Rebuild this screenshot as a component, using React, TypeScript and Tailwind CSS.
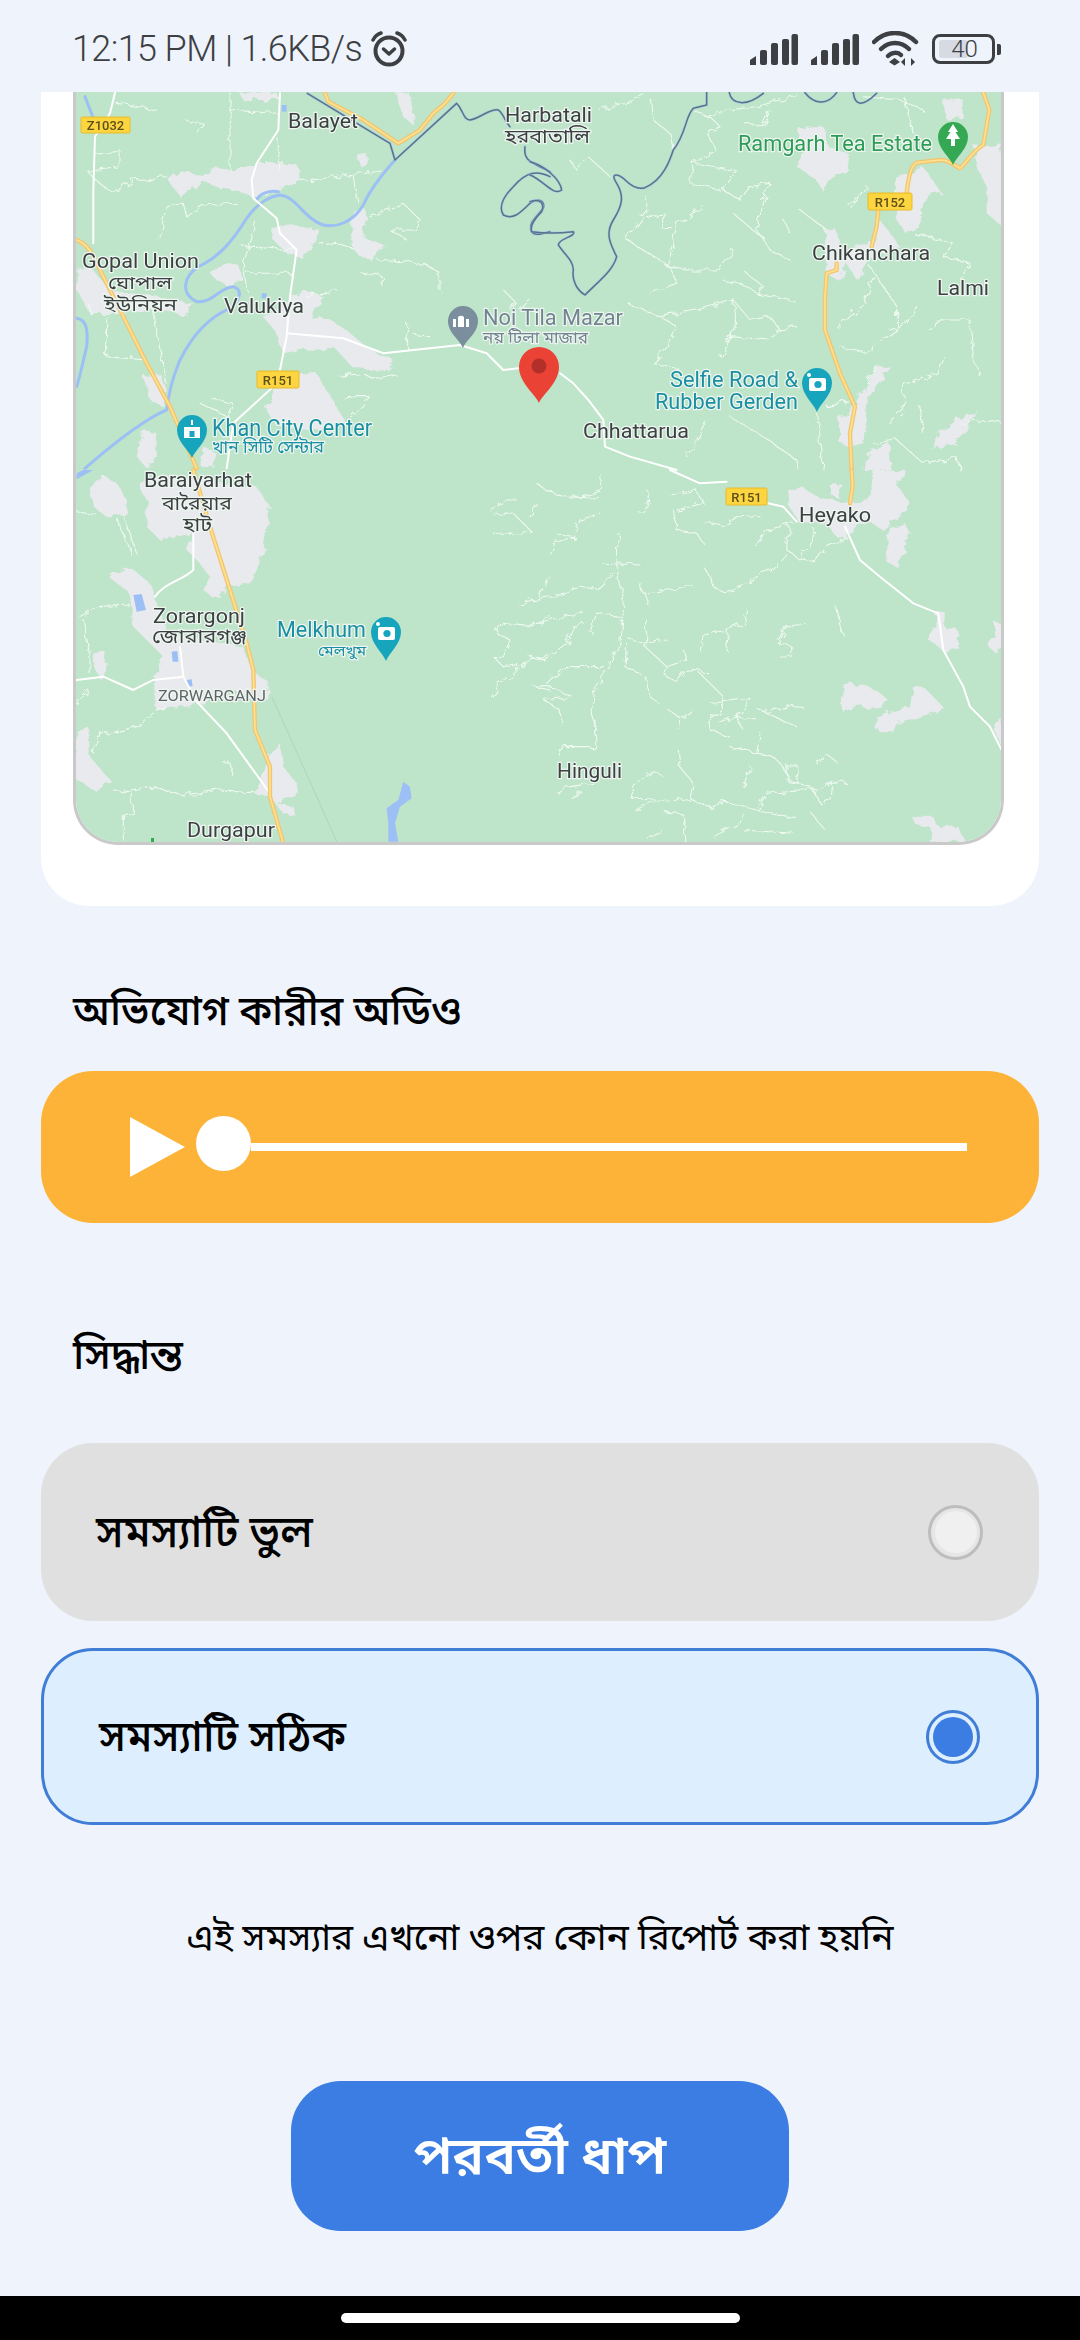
import React from 'react';

// thin village roads, in zoom-crop coordinates for each map quadrant
const thinTopLeft = [
  'M140 40 L260 60', 'M480 10 L480 240', 'M480 60 L620 70', 'M345 90 L400 100 L380 135',
  'M75 190 L150 180 L150 230 L50 240 L75 270 L130 310 L190 270 L290 260',
  'M265 445 L290 350 L340 340 L350 380 L400 345 L500 340', 'M620 140 L630 240',
  'M695 275 L930 240 M850 255 L860 330', 'M560 400 L520 520 L530 600', 'M520 470 L680 480',
  'M530 550 L670 550', 'M750 465 L800 460 L850 475',
  'M900 380 L1000 340 L1050 390 L1040 420 L960 420 L1010 450',
  'M920 510 L1060 520 L1110 550 L1110 600', 'M870 545 L940 560 L940 590', 'M705 620 L800 600',
  'M1300 600 L1340 640 L1320 660', 'M1010 700 L1010 780', 'M1030 730 L1080 740',
  'M800 860 L880 850 L910 870 L980 855', 'M820 920 L900 920 L840 990',
  'M420 920 L490 940 L470 980 L390 940', 'M110 680 L110 800 L230 810', 'M250 660 L270 780 L290 880',
  'M60 640 L60 670 L170 670', 'M1350 660 L1380 630',
];

const thinTopRight = [
  'M210 60 C 240 50 290 40 340 10', 'M365 30 L370 90 L420 130 L430 180',
  'M120 210 L140 240 L180 205 L240 260', 'M500 70 L540 80 L570 110 L530 130 L560 180 L490 220 L480 280 L570 300',
  'M530 80 L590 60 L680 50 L800 15', 'M640 100 L700 110 L720 60',
  'M490 220 L620 240 L580 300 L630 330 L660 290 L720 280 L700 340 L680 420 L720 480 L780 510',
  'M610 370 L680 430 L700 440', 'M520 350 L440 400 L430 470 L410 530 L470 540 L560 540 L610 480',
  'M350 320 L350 360 L300 430 L290 450 L420 530 L440 580 L360 610', 'M350 380 L410 375 L390 410 L420 410',
  'M295 640 L390 680 L440 710 L410 780 L370 820 L450 840', 'M390 680 L500 660 L610 630 L620 700 L570 800',
  'M610 630 L660 690 L720 680 L750 720 L800 710', 'M600 740 L720 750 L750 720', 'M650 550 L700 590 L680 610 L790 630',
  'M580 570 L650 590 L700 620', 'M810 360 L890 420', 'M780 430 L760 390', 'M960 350 L1010 290',
  'M1020 530 L1100 650 L1100 720 L1000 790 L930 770', 'M1030 560 L1000 640 L920 710',
  'M1150 430 L1270 460 L1240 500 L1320 520 L1290 570', 'M1000 20 L1110 30 L1180 60', 'M1120 20 L1150 130',
  'M1200 720 L1240 690 L1320 690 L1330 800 L1350 860', 'M1240 800 L1220 850 L1120 880 L1120 960 L1080 1000',
  'M1160 650 L1130 700 L1080 720', 'M890 950 L960 935', 'M860 970 L880 1140', 'M530 1000 L470 1100',
  'M600 980 L700 1040 L800 1110 L810 1140', 'M1030 1060 L1100 1050 L1180 1120 L1280 1100 L1290 1140',
  'M1170 950 L1180 1030', 'M1290 1000 L1380 990 L1418 1000', 'M1010 880 L1040 830',
];

const thinBottomLeft = [
  'M20 125 L80 135', 'M140 145 L190 260', 'M160 140 L200 250', 'M30 440 L80 410 L180 405',
  'M40 450 L60 560 L60 610', 'M20 700 L55 660', 'M80 800 L200 770 L260 720 L290 710', 'M80 800 L70 850',
  'M130 960 L180 965 L250 950 L340 975 L450 960 L550 965', 'M190 970 L190 1030 L160 1040 L160 1110',
  'M460 875 L480 880 L490 920', 'M1260 120 L1300 90 L1340 90', 'M1270 130 L1330 130 L1390 190 L1270 190',
  'M1350 405 L1400 390 L1440 320',
  'M1440 440 L1380 470 L1300 460 L1280 490 L1320 510 L1300 560 L1270 560 L1300 590 L1340 580 L1330 620 L1290 640 L1265 680',
  'M1340 600 L1380 570 L1440 560', 'M1395 650 L1440 660',
];

const thinBottomRight = [
  'M20 40 L50 60 L100 80 L210 85', 'M160 80 L220 60 L210 15', 'M350 60 L355 110 L330 130',
  'M420 75 L500 60 L520 100 L440 120', 'M430 120 L440 180 L500 190 L520 220', 'M520 155 L580 165 L620 135 L690 140',
  'M0 140 L25 105', 'M210 130 L150 150 L130 200 L80 190', 'M130 200 L70 220 L60 250', 'M675 230 L710 180 L790 160',
  'M775 165 L770 240 L805 265 L855 275 L890 230 L950 205', 'M770 255 L730 300 L690 315 L640 345 L590 370 L550 350 L530 300',
  'M850 170 L850 220 L810 260', 'M265 190 L260 300 L280 380 L270 520 L240 580 L190 670 L180 720 L200 780 L200 830 L100 830 L90 860',
  'M0 390 L60 380 L100 370 L150 350 L190 360 L250 310', 'M220 280 L330 285', 'M330 340 L340 370 L490 350', 'M345 370 L360 410',
  'M0 465 L90 440 L160 430', 'M180 485 L200 430 L270 440', 'M0 560 L40 570 L110 520 L130 470 L160 460',
  'M300 510 L345 520 L410 510', 'M290 520 L285 590 L330 610', 'M345 530 L410 590 L410 620 L440 635 L470 600 L530 605',
  'M410 590 L470 570 L460 540', 'M350 450 L350 530', 'M345 620 L360 680 L385 700', 'M510 545 L520 495 L590 480 L640 460 L650 420',
  'M590 480 L595 545', 'M20 650 L60 650 L130 680 L40 690 L90 720 L95 765', 'M50 640 L100 590 L220 590',
  'M410 715 L450 745 L480 720 M450 745 L445 775', 'M510 610 L580 680 L580 720 L530 750 L540 780 L600 800',
  'M545 700 L660 685 L620 740 L640 780', 'M570 760 L620 740 L680 750', 'M680 715 L800 770 M700 725 L780 710 L820 712',
  'M600 830 L730 860 L760 890 L780 930 L860 960 L900 940 L950 940', 'M690 790 L680 850', 'M770 885 L800 885 L805 940 L775 935 L770 885',
  'M445 840 L450 890 L490 940 L480 985 L540 1015 L580 995 L680 1020 L800 1045', 'M305 945 L305 985 L480 990',
  'M310 945 L370 905 L400 920', 'M315 1020 L370 995', 'M680 1020 L710 970 L850 960 L870 1000 L900 990 L905 940',
  'M640 1030 L630 1060 L550 1100', 'M640 1080 L790 1090', 'M405 1025 L460 1035 L465 1115', 'M350 1105 L405 1075',
  'M660 890 L640 950', 'M845 1030 L880 1075', 'M770 470 L745 520 L785 530 L785 555 L745 555', 'M770 470 L825 460',
  'M915 405 L925 440 L940 495', 'M85 970 L120 950 L190 940', 'M130 990 L150 960', 'M865 885 L885 850 L925 880',
];

const quadrants = [
  {
    origin: 'translate(70 90) scale(0.3333)',
    thin: thinTopLeft,
    towns: [
      'M295 270 L325 242 L400 258 L415 232 L490 240 L560 222 L680 222 L695 270 L625 300 L560 325 L500 300 L440 290 L395 275 L330 320 Z',
      'M510 8 L620 8 L630 30 L520 30 Z', 'M975 10 L1020 10 L1035 110 L1000 80 Z', 'M860 190 L885 185 L892 225 L870 228 Z',
      'M680 405 L750 420 L720 480 L690 500 L650 490 L610 450 L605 410 Z', 'M845 370 L890 360 L880 440 L950 470 L905 510 L870 500 L845 470 Z',
      'M415 545 L500 520 L520 570 L480 590 L440 570 Z',
      'M580 680 L700 600 L760 620 L720 680 L780 690 L830 720 L900 780 L970 810 L960 840 L850 835 L800 780 L690 780 L640 790 L620 730 Z',
      'M640 850 L740 850 L800 950 L830 1000 L760 1020 L620 1010 L590 960 Z', 'M20 540 L60 530 L120 600 L370 640 L340 680 L280 660 L60 670 L20 600 Z',
      'M220 1020 L260 1030 L260 1100 L230 1135 L200 1100 Z', 'M220 860 L270 850 L290 900 L280 950 L240 930 Z', 'M400 1070 L440 1090 L430 1130 L390 1130 Z',
    ],
    water: ['M635 45 h15 v20 h-15z', 'M575 610 h15 v15 h-15z'],
    rivers: [
      'M975 210 C 930 260 900 300 880 345 C 850 395 800 415 760 405 C 700 385 680 320 630 315 C 590 320 555 350 530 385 C 490 450 450 500 385 530 C 340 560 330 610 380 635 C 430 640 450 590 490 590 C 520 600 510 630 480 655 C 420 680 370 730 330 810 C 310 860 300 890 290 960 C 220 990 120 1070 45 1135',
      'M560 330 C 570 310 600 300 625 305', 'M45 20 L70 85', 'M20 685 C 50 690 55 720 50 770 C 40 810 30 860 20 890',
    ],
    border: [
      'M712 10 L960 160 L975 210 L1160 40 C 1180 60 1180 90 1200 90 C 1230 85 1260 55 1285 60 C 1300 70 1305 95 1320 110',
      'M1365 170 C 1360 210 1380 215 1420 235 L1440 245',
      'M1440 260 C 1400 240 1370 245 1330 290 C 1300 320 1285 350 1300 375 C 1330 390 1350 370 1380 340 C 1410 320 1425 335 1420 355 C 1395 385 1375 400 1385 425 C 1395 440 1420 430 1440 425',
    ],
    highways: [
      'M765 10 L775 35 L880 90 L985 160 L1050 120 L1090 70 L1125 40 L1150 10',
      'M20 450 C 50 460 70 490 90 540 L160 680 L230 820 L300 950 L380 1135',
    ],
    roads: [
      'M630 10 L625 120 L560 220 L545 270 L550 325 L620 385 L630 430 L680 480 L660 620 L650 740 L630 840',
      'M650 730 L820 745 L940 790 L1170 765 L1250 790 L1300 840 L1345 835',
      'M610 890 L490 1000 L470 1135', 'M135 8 L120 70 L75 140 L70 300 L70 460',
    ],
  },
  {
    origin: 'translate(530 90) scale(0.3333)',
    thin: thinTopRight,
    towns: [
      'M805 115 L880 110 L900 175 L955 190 L950 240 L905 265 L880 305 L860 270 L800 230 L820 200 Z', 'M1240 30 L1295 25 L1295 80 L1250 90 Z',
      'M1335 170 L1415 160 L1418 410 L1370 370 L1370 290 L1340 230 Z', 'M1095 260 L1130 250 L1180 230 L1235 310 L1190 315 L1170 400 L1125 430 L1095 380 Z',
      'M885 420 L915 415 L940 490 L1030 450 L1050 390 L1110 470 L1020 510 L980 570 L950 520 L930 575 L890 550 L885 490 Z',
      'M1040 830 L1085 830 L1020 910 L1000 1060 L960 1070 L930 1060 L925 985 L950 980 L975 940 L1020 870 Z', 'M1010 1090 L1075 1055 L1085 1140 L1000 1140 Z',
      'M1230 1020 L1340 960 L1310 1020 L1270 1060 L1210 1080 Z',
    ],
    water: [],
    rivers: [],
    border: [
      'M0 215 C 40 225 90 265 95 300 C 70 320 40 270 0 255',
      'M0 335 C 30 325 45 340 35 365 C 10 390 0 410 5 425 C 40 430 90 430 130 425 C 140 440 85 445 85 465 C 100 490 130 510 130 540 C 125 570 140 600 165 615 C 210 570 250 540 260 500 C 240 460 225 430 250 390 C 275 350 285 320 260 280 C 240 250 260 250 280 265 C 300 285 320 300 345 293 C 400 270 420 210 430 180 C 470 130 465 80 490 55 L530 45 L530 8',
      'M598 8 C 605 45 650 50 700 10', 'M825 8 C 850 40 890 50 920 8', 'M970 8 C 975 50 1000 50 1040 10',
    ],
    highways: [
      'M1360 8 L1378 60 L1360 165 C 1320 190 1310 220 1290 235 C 1270 225 1260 210 1230 210 L1160 218 C 1140 230 1135 270 1130 310',
      'M1045 360 L1040 410 L1025 470', 'M920 520 L920 540 L890 550 L885 620 L885 720 L930 850 L975 950 L960 1030 L965 1140',
    ],
    roads: ['M90 850 L130 880 L175 930 L220 990 L225 1070 L300 1100 L440 1140'],
  },
  {
    origin: 'translate(70 470) scale(0.3333)',
    thin: thinBottomLeft,
    towns: [
      'M230 90 L210 50 L250 10 L560 50 L600 110 L580 240 L540 340 L480 350 L430 385 L400 360 L420 320 L380 270 L350 240 L370 190 L270 210 L230 170 Z',
      'M60 60 L100 15 L140 40 L170 90 L170 130 L110 140 L70 110 Z',
      'M115 320 L180 290 L240 340 L260 400 L290 480 L340 500 L520 530 L545 600 L600 640 L590 690 L480 660 L400 700 L260 720 L250 640 L280 560 L240 520 L190 470 L180 370 Z',
      'M70 545 L110 550 L100 640 L75 600 Z', 'M20 780 L55 770 L60 860 L120 930 L80 965 L20 930 Z',
      'M600 850 L630 820 L640 890 L680 940 L680 980 L620 1000 L670 1010 L680 1040 L640 1030 L600 980 L550 970 L570 940 Z',
    ],
    water: [
      'M190 375 L215 372 L228 420 L200 425 Z', 'M305 545 L322 543 L325 575 L308 575 Z', 'M350 630 L365 628 L368 648 L355 650 Z',
      'M1000 935 L1020 950 L1025 985 L990 1010 L975 1060 L985 1115 L955 1115 L955 1060 L950 1015 L985 990 Z', 'M20 28 L70 0 L40 0 L20 10 Z',
    ],
    rivers: [],
    border: [],
    highways: ['M370 0 L420 170 L480 360 L530 520 L550 600 L555 780 L600 890 L600 980 L640 1120'],
    roads: [
      'M370 190 V300 C 340 330 280 340 255 380', 'M20 630 L100 620 L190 660 L250 630 L340 620',
      'M330 530 L340 620 L380 695 L470 790 L600 970',
    ],
  },
  {
    origin: 'translate(530 470) scale(0.3333)',
    thin: thinBottomRight,
    towns: [
      'M775 65 L815 50 L860 80 L950 100 L1020 90 L1030 0 L1125 0 L1105 50 L1140 100 L1115 130 L1060 180 L1010 150 L950 190 L950 205 L920 200 L890 160 L810 160 L780 110 Z',
      'M1075 175 L1130 165 L1142 190 L1125 250 L1100 290 L1070 275 Z', 'M900 45 L935 40 L925 80 L900 75 Z',
      'M945 645 L1000 640 L1070 685 L1050 715 L990 710 L930 720 Z',
      'M1040 735 L1140 710 L1150 650 L1175 645 L1220 690 L1248 720 L1150 750 L1100 760 L1090 785 L1040 780 Z',
      'M1190 505 L1215 470 L1220 420 L1240 420 L1245 475 L1285 480 L1285 535 L1245 545 L1225 530 Z',
      'M1375 530 L1395 495 L1395 455 L1418 460 L1418 520 L1400 550 Z', 'M1385 770 L1418 750 L1418 830 Z',
      'M1145 1040 L1210 1040 L1225 1070 L1280 1065 L1310 1115 L1200 1115 L1205 1075 L1160 1065 Z',
    ],
    water: [],
    rivers: [],
    border: [],
    highways: ['M965 0 L968 50 L960 100'],
    roads: [
      'M420 0 L510 40 L590 35', 'M715 100 L760 110 L800 155',
      'M945 170 L990 270 L1050 320 L1150 400 L1225 430 L1240 540 L1300 650 L1320 710 L1380 770 L1415 840',
    ],
  },
];

const dark = '#3c4043';
const teal = '#1a8fa3';
const labels = [
  { x: 288, y: 128, w: 70, size: 21, fill: dark, text: 'Balayet' },
  { x: 505, y: 122, w: 87, size: 21, fill: dark, text: 'Harbatali' },
  { x: 505, y: 143, w: 85, size: 19, fill: dark, text: 'হরবাতালি' },
  { x: 82, y: 268, w: 117, size: 21, fill: dark, text: 'Gopal Union' },
  { x: 108, y: 289, w: 64, size: 18, fill: dark, text: 'ঘোপাল' },
  { x: 104, y: 311, w: 73, size: 18, fill: dark, text: 'ইউনিয়ন' },
  { x: 224, y: 313, w: 80, size: 21, fill: dark, text: 'Valukiya' },
  { x: 483, y: 325, w: 140, size: 22, fill: '#71848f', text: 'Noi Tila Mazar' },
  { x: 483, y: 343, w: 105, size: 16, fill: '#71848f', text: 'নয় টিলা মাজার' },
  { x: 212, y: 436, w: 160, size: 23, fill: teal, text: 'Khan City Center' },
  { x: 212, y: 453, w: 112, size: 17, fill: teal, text: 'খান সিটি সেন্টার' },
  { x: 738, y: 151, w: 194, size: 22, fill: '#2e9b57', text: 'Ramgarh Tea Estate' },
  { x: 812, y: 260, w: 118, size: 21, fill: dark, text: 'Chikanchara' },
  { x: 937, y: 295, w: 52, size: 21, fill: dark, text: 'Lalmi' },
  { x: 670, y: 387, w: 128, size: 22, fill: teal, text: 'Selfie Road &' },
  { x: 655, y: 409, w: 143, size: 22, fill: teal, text: 'Rubber Gerden' },
  { x: 583, y: 438, w: 106, size: 21, fill: dark, text: 'Chhattarua' },
  { x: 144, y: 487, w: 108, size: 21, fill: dark, text: 'Baraiyarhat' },
  { x: 162, y: 510, w: 70, size: 19, fill: dark, text: 'বারৈয়ার' },
  { x: 183, y: 531, w: 29, size: 19, fill: dark, text: 'হাট' },
  { x: 153, y: 623, w: 92, size: 21, fill: dark, text: 'Zorargonj' },
  { x: 152, y: 643, w: 95, size: 19, fill: dark, text: 'জোরারগঞ্জ' },
  { x: 277, y: 637, w: 89, size: 22, fill: teal, text: 'Melkhum' },
  { x: 318, y: 656, w: 48, size: 15, fill: teal, text: 'মেলখুম' },
  { x: 158, y: 701, w: 108, size: 14, fill: '#5f6368', text: 'ZORWARGANJ' },
  { x: 187, y: 837, w: 88, size: 20, fill: dark, text: 'Durgapur' },
  { x: 799, y: 522, w: 72, size: 21, fill: dark, text: 'Heyako' },
  { x: 557, y: 778, w: 65, size: 21, fill: dark, text: 'Hinguli' },
];

const shields = [
  { x: 81, y: 117, w: 49, h: 16, text: 'Z1032' },
  { x: 257, y: 371, w: 42, h: 17, text: 'R151' },
  { x: 868, y: 193, w: 44, h: 17, text: 'R152' },
  { x: 726, y: 488, w: 41, h: 17, text: 'R151' },
];

const Pin = ({ x, y, r, tip, fill, children }: { x: number; y: number; r: number; tip: number; fill: string; children?: React.ReactNode }) => (
  <g>
    <path
      d={`M${x - r} ${y} A${r} ${r} 0 1 1 ${x + r} ${y} C${x + r} ${y + r * 0.8} ${x + 3} ${tip - 8} ${x} ${tip} C${x - 3} ${tip - 8} ${x - r} ${y + r * 0.8} ${x - r} ${y} Z`}
      fill={fill}
    />
    {children}
  </g>
);

const CameraGlyph = ({ x, y, fill }: { x: number; y: number; fill: string }) => (
  <g>
    <rect x={x - 8} y={y - 6} width={17} height={13} rx={2} fill="#fff" />
    <circle cx={x - 8} cy={y - 9} r={2} fill="#fff" />
    <circle cx={x + 1} cy={y + 0.5} r={3.6} fill={fill} />
  </g>
);

const MapView = () => (
  <svg width={925} height={750} viewBox="76 92 925 750" className="block blur-[0.4px]">
    <defs>
      <filter id="wiggle" x="-5%" y="-5%" width="110%" height="110%">
        <feTurbulence type="fractalNoise" baseFrequency="0.035" numOctaves="3" seed="4" />
        <feDisplacementMap in="SourceGraphic" scale="26" />
      </filter>
    </defs>
    <rect x={70} y={90} width={940} height={760} fill="#bee4c9" />
    {quadrants.map((q, i) => (
      <g key={i} transform={q.origin} fill="none" strokeLinecap="round" strokeLinejoin="round">
        <g filter="url(#wiggle)">
          {q.towns.map((d, k) => <path key={k} d={d} fill="#e8eaed" />)}
          {q.thin.map((d, k) => <path key={k} d={d} stroke="#f1faf3" strokeWidth={3.2} />)}
        </g>
        {q.water.map((d, k) => <path key={k} d={d} fill="#9cc0f5" />)}
        {q.rivers.map((d, k) => <path key={k} d={d} stroke="#9cc0f5" strokeWidth={9} />)}
        {q.border.map((d, k) => (
          <g key={k}>
            <path d={d} stroke="#9cc0f5" strokeWidth={8} opacity={0.55} />
            <path d={d} stroke="#5a7389" strokeWidth={4.5} />
          </g>
        ))}
        {q.roads.map((d, k) => <path key={k} d={d} stroke="#ffffff" strokeWidth={6} />)}
        {q.highways.map((d, k) => (
          <g key={k}>
            <path d={d} stroke="#f3c56e" strokeWidth={13} />
            <path d={d} stroke="#fde293" strokeWidth={5} />
          </g>
        ))}
      </g>
    ))}
    <path d="M272 697 L337 842" stroke="#aed6ba" strokeWidth={1} fill="none" />
    <rect x={151} y={838} width={3} height={6} fill="#34a853" />

    {shields.map((s, i) => (
      <g key={i}>
        <rect x={s.x} y={s.y} width={s.w} height={s.h} rx={1.5} fill="#fdd53f" stroke="#e8ba2e" strokeWidth={1} />
        <text x={s.x + s.w / 2} y={s.y + s.h - 3.5} textAnchor="middle" fontSize={13} fontWeight={500} fill="#5c4f1c">{s.text}</text>
      </g>
    ))}

    {labels.map((l, i) => (
      <text
        key={i}
        x={l.x}
        y={l.y}
        fontSize={l.size}
        fill={l.fill}
        stroke="#eef6f0"
        strokeWidth={2.4}
        paintOrder="stroke"
        textLength={l.w}
        lengthAdjust="spacingAndGlyphs"
      >
        {l.text}
      </text>
    ))}

    <Pin x={463} y={321} r={15} tip={348} fill="#7b8e9e">
      <path d="M453 327 v-8 h3 v8 Z M458 327 v-10 a4 4 0 0 1 6 0 v10 Z M466 327 v-8 h3 v8 Z" fill="#fff" />
    </Pin>
    <Pin x={192} y={430} r={15} tip={458} fill="#17a5bd">
      <path d="M192 420 v5 M185 428 h14 v9 h-14 Z" stroke="#fff" strokeWidth={2} fill="#fff" />
      <rect x={189.5} y={431} width={5} height={6} fill="#17a5bd" />
    </Pin>
    <Pin x={817} y={383} r={15} tip={412} fill="#17a5bd">
      <CameraGlyph x={817} y={384} fill="#17a5bd" />
    </Pin>
    <Pin x={386} y={632} r={15} tip={661} fill="#17a5bd">
      <CameraGlyph x={386} y={633} fill="#17a5bd" />
    </Pin>
    <Pin x={953} y={137} r={15} tip={165} fill="#34a853">
      <path d="M953 124 L958 132 H955.5 L960 139 H955 V146 H951 V139 H946 L950.5 132 H948 Z" fill="#fff" />
    </Pin>
    <Pin x={539} y={367} r={20} tip={403} fill="#ea4335">
      <circle cx={539} cy={366} r={7.5} fill="#b3302a" />
    </Pin>
  </svg>
);

const AlarmIcon = () => (
  <svg width={38} height={36} viewBox="0 0 38 36" fill="none" stroke="#3d3f43" strokeLinecap="round">
    <circle cx={19} cy={20} r={13.5} strokeWidth={4} />
    <path d="M13.5 18 L19 23 L24.5 18" strokeWidth={3.5} strokeLinejoin="round" />
    <path d="M3 9 C5 5 8 3 11 2 M35 9 C33 5 30 3 27 2" strokeWidth={3.5} />
  </svg>
);

const SignalIcon = () => (
  <svg width={48} height={31} viewBox="0 0 48 31" fill="#3d3f43">
    <path d="M0 31 V26 L6 22 V31 Z" />
    <rect x={10} y={16} width={7} height={15} rx={2} />
    <rect x={21} y={9} width={7} height={22} rx={2} />
    <rect x={32} y={5} width={7} height={26} rx={2} />
    <rect x={41.5} y={0} width={6.5} height={31} rx={2} />
  </svg>
);

const WifiIcon = () => (
  <svg width={47} height={36} viewBox="0 0 47 36" fill="none" stroke="#3d3f43" strokeLinecap="round">
    <path d="M2 11 C14 -1 32 -1 44 11" strokeWidth={4.5} />
    <path d="M9 18 C17 10 29 10 37 18" strokeWidth={4.5} />
    <path d="M16 25 C20 21 26 21 29 24" strokeWidth={4.5} />
    <path d="M22.5 27 L28 31 L22.5 34.5 L17 31 Z" fill="#3d3f43" stroke="none" />
    <path d="M33 35 V27 L29 31 Z M39 27 V35 L43 31 Z" fill="#3d3f43" stroke="none" />
  </svg>
);

const Battery = () => (
  <div className="flex items-center gap-[2px]">
    <div className="relative h-[30px] w-[63px] rounded-[8px] border-[3px] border-[#3d3f43]">
      <div className="absolute left-[4px] top-[3px] h-[18px] w-[29px] rounded-[3px] bg-[#d6dae3]" />
      <span className="relative flex h-full items-center justify-center pl-[2px] text-[24px] font-light leading-none text-[#3d3f43]">40</span>
    </div>
    <div className="h-[11px] w-[4px] rounded-r-[2px] bg-[#3d3f43]" />
  </div>
);

const Option = ({ label, selected }: { label: string; selected: boolean }) =>
  selected ? (
    <div className="flex h-[177px] items-center justify-between rounded-[52px] border-[3px] border-[#3f7dd6] bg-[#ddeeff] pl-[55px] pr-[56px]">
      <span className="text-[43px] font-medium leading-none text-black">{label}</span>
      <div className="flex h-[54px] w-[54px] items-center justify-center rounded-full border-[3px] border-[#3f7dd6]">
        <div className="h-[40px] w-[40px] rounded-full bg-[#3b7de3]" />
      </div>
    </div>
  ) : (
    <div className="flex h-[178px] items-center justify-between rounded-[52px] bg-[#e0e0e0] pl-[55px] pr-[56px]">
      <span className="text-[44px] font-medium leading-none text-black">{label}</span>
      <div className="flex h-[55px] w-[55px] items-center justify-center rounded-full border-[3px] border-[#bdbdbd] bg-[#e6e6e6]">
        <div className="h-[42px] w-[42px] rounded-full bg-[#f0f0f0]" />
      </div>
    </div>
  );

const App: React.FC = () => {
  return (
    <div className="flex h-[2340px] w-[1080px] flex-col overflow-hidden bg-[#eef3fc] font-['Roboto','Noto_Sans','Noto_Sans_Bengali',sans-serif]">
      {/* status bar */}
      <div className="flex h-[92px] shrink-0 items-center justify-between pt-[6px] pl-[72px] pr-[79px]">
        <div className="flex items-center gap-[8px]">
          <span className="text-[36px] font-light leading-none tracking-[-0.6px] text-[#3d3f43]">12:15 PM | 1.6KB/s</span>
          <AlarmIcon />
        </div>
        <div className="flex items-center gap-[13px]">
          <SignalIcon />
          <SignalIcon />
          <WifiIcon />
          <Battery />
        </div>
      </div>

      {/* map card */}
      <div className="mx-[41px] h-[814px] shrink-0 rounded-b-[48px] bg-white px-[32px]">
        <div className="h-[753px] w-[931px] overflow-hidden rounded-b-[45px] border-x-[3px] border-b-[3px] border-[#c9c9c9]">
          <MapView />
        </div>
      </div>

      {/* audio */}
      <div className="flex h-[165px] shrink-0 items-start pl-[73px] pt-[75px]">
        <h2 className="text-[41px] font-medium leading-[60px] text-black">অভিযোগ কারীর অডিও</h2>
      </div>
      <div className="mx-[41px] flex h-[152px] shrink-0 items-center rounded-[52px] bg-[#fcb337] pl-[89px] pr-[72px]">
        <svg width={55} height={60} viewBox="0 0 55 60" className="shrink-0" fill="#fff">
          <path d="M0 0 L55 30 L0 60 Z" />
        </svg>
        <div className="ml-[11px] mb-[7px] h-[55px] w-[55px] shrink-0 rounded-full bg-white" />
        <div className="h-[8px] flex-1 bg-white" />
      </div>

      {/* decision */}
      <div className="flex h-[220px] shrink-0 items-start pl-[73px] pt-[102px]">
        <h2 className="text-[42px] font-medium leading-[60px] text-black">সিদ্ধান্ত</h2>
      </div>
      <div className="mx-[41px] flex shrink-0 flex-col gap-[27px]">
        <Option label="সমস্যাটি ভুল" selected={false} />
        <Option label="সমস্যাটি সঠিক" selected />
      </div>

      <p className="mt-[84px] h-[58px] shrink-0 text-center text-[37px] leading-[58px] text-black">
        এই সমস্যার এখনো ওপর কোন রিপোর্ট করা হয়নি
      </p>

      <div className="mt-[114px] flex shrink-0 justify-center">
        <button className="flex h-[150px] w-[498px] items-center justify-center rounded-[50px] bg-[#3b7de3] text-[53px] font-semibold leading-none text-white">
          পরবর্তী ধাপ
        </button>
      </div>

      {/* gesture bar */}
      <div className="mt-[65px] flex h-[44px] shrink-0 justify-center bg-black pt-[17px]">
        <div className="h-[10px] w-[399px] rounded-full bg-white" />
      </div>
    </div>
  );
};

export default App;
